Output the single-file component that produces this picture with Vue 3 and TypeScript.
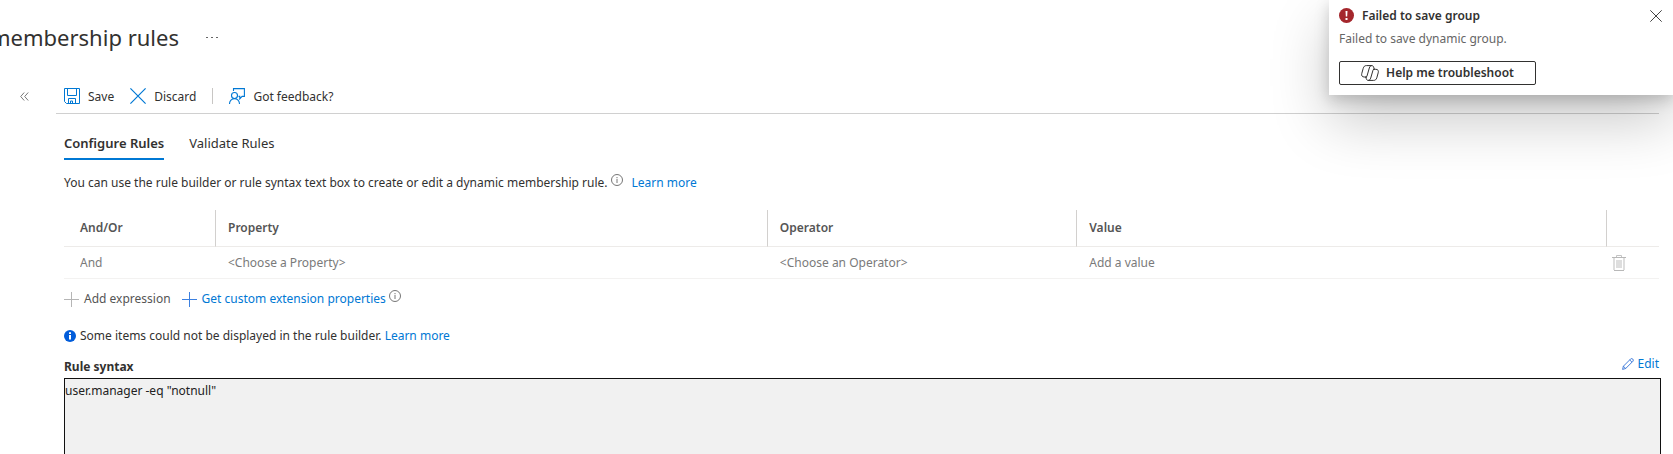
<script setup lang="ts">
import { ref } from 'vue'

const syntax = ref('user.manager -eq "notnull"')
const value = ref('')
</script>

<template>
  <div class="page">
    <header class="title-bar">
      <h1>membership rules</h1>
      <button class="more" aria-label="More options">
        <svg width="13" height="3" viewBox="0 0 13 3" fill="#666"><rect x="0" y="1" width="2" height="1" /><rect x="5" y="1" width="2" height="1" /><rect x="10" y="1" width="2" height="1" /></svg>
      </button>
    </header>

    <div class="body">
      <aside class="rail">
        <button class="collapse" aria-label="Collapse menu">
          <svg width="9" height="9" viewBox="0 0 9 9" fill="none" stroke="#777" stroke-width="1"><path d="M4.2 .5L.7 4.5l3.5 4M8.2 .5L4.7 4.5l3.500 4" /></svg>
        </button>
      </aside>

      <main class="content">
        <div class="toolbar">
          <button class="tool">
            <svg width="16" height="16" viewBox="0 0 16 16" fill="none" stroke="#0078d4"><path d="M.5 .5h15v15H2.500l-2-2zM3.500 .5v7h9v-7M4.500 15.500v-5h7v5M6.500 15.500v-2.500h2v2.500" /></svg>
            <span>Save</span>
          </button>
          <button class="tool">
            <svg width="16" height="16" viewBox="0 0 16 16" fill="none" stroke="#0078d4" stroke-width="1.200"><path d="M.4 .4l15.200 15.200M15.600 .4L.4 15.600" /></svg>
            <span>Discard</span>
          </button>
          <span class="divider"></span>
          <button class="tool">
            <svg width="16" height="16" viewBox="0 0 16 16" fill="none" stroke="#0078d4" stroke-width="1.100"><path d="M4.500 3V.6h10.900v7.800h-2.300l-2.300 2.400V8.400H9.500" /><circle cx="5.500" cy="7.500" r="3" /><path d="M.5 16c0-3 2.200-5.400 5-5.400s5 2.400 5 5.400" /></svg>
            <span>Got feedback?</span>
          </button>
        </div>

        <div class="blade">
          <div class="tabs" role="tablist">
            <button class="tab active" role="tab" aria-selected="true">Configure Rules</button>
            <button class="tab" role="tab" aria-selected="false">Validate Rules</button>
          </div>

          <p class="intro">
            <span>You can use the rule builder or rule syntax text box to create or edit a dynamic membership rule.</span>
            <svg class="info" width="12" height="12" viewBox="0 0 12 12" fill="none" stroke="#666" stroke-width=".9"><circle cx="6" cy="6" r="5.500" /><path d="M6 5v4M6 3v1.200" /></svg>
            <a href="#">Learn more</a>
          </p>

          <table class="rules">
            <thead>
              <tr>
                <th class="c-join">And/Or</th>
                <th class="c-prop">Property</th>
                <th class="c-op">Operator</th>
                <th>Value</th>
                <th class="c-act"></th>
              </tr>
            </thead>
            <tbody>
              <tr>
                <td class="c-join"><select aria-label="And/Or" disabled><option>And</option></select></td>
                <td><select aria-label="Property" disabled><option>&lt;Choose a Property&gt;</option></select></td>
                <td><select aria-label="Operator" disabled><option>&lt;Choose an Operator&gt;</option></select></td>
                <td><input v-model="value" aria-label="Value" type="text" placeholder="Add a value" disabled /></td>
                <td class="c-act">
                  <button class="trash" aria-label="Delete" disabled>
                    <svg width="14" height="16" viewBox="0 0 14 16" fill="none"><path d="M4.500 2V.5h5V2" stroke="#c4c4c4" /><path d="M0 2.500h14" stroke="#b8b8b8" /><path d="M2 3v12M12 3v12" stroke="#dedede" stroke-width="2" /><path d="M2 15.500h10" stroke="#b8b8b8" /><path d="M4 5h6v8H4z" fill="#dedede" /></svg>
                  </button>
                </td>
              </tr>
            </tbody>
          </table>

          <div class="actions">
            <button class="add">
              <svg width="15" height="15" viewBox="0 0 15 15" stroke="#b5b5b5"><path d="M0 7.500h15M7.500 0v15" /></svg>
              <span>Add expression</span>
            </button>
            <a href="#" class="get">
              <svg width="15" height="15" viewBox="0 0 15 15" stroke="#3c80e0"><path d="M0 7.500h15M7.500 0v15" /></svg>
              <span>Get custom extension properties</span>
            </a>
            <svg class="info" width="12" height="12" viewBox="0 0 12 12" fill="none" stroke="#666" stroke-width=".9"><circle cx="6" cy="6" r="5.500" /><path d="M6 5v4M6 3v1.200" /></svg>
          </div>

          <p class="note">
            <svg width="12" height="12" viewBox="0 0 12 12"><circle cx="6" cy="6" r="6" fill="#015cda" /><path d="M5 5h2v4.500H5zM5 2.300h2v1.700H5z" fill="#fff" /></svg>
            <span>Some items could not be displayed in the rule builder. <a href="#">Learn more</a></span>
          </p>

          <div class="syntax-head">
            <label for="syntax">Rule syntax</label>
            <a href="#" class="edit">
              <svg width="12" height="12" viewBox="0 0 12 12" fill="none" stroke="#2f6fd6" stroke-width=".9"><path d="M.6 11.400l.8-3.200L8.700 .9c1.300-1.200 3.500 .9 2.300 2.300L3.700 10.500zM1.400 8.200l2.300 2.300M7.700 1.900L10 4.200" /></svg>
              <span>Edit</span>
            </a>
          </div>
          <textarea id="syntax" v-model="syntax" readonly></textarea>
        </div>
      </main>
    </div>

    <section class="toast" role="alert">
      <div class="toast-head">
        <svg width="15" height="15" viewBox="0 0 15 15"><circle cx="7.500" cy="7.500" r="7.500" fill="#a4262c" /><path d="M6.500 3h2l-.3 5.500H6.800zM6.500 10h2v2h-2z" fill="#fff" /></svg>
        <strong>Failed to save group</strong>
        <button class="close" aria-label="Close">
          <svg width="12" height="12" viewBox="0 0 12 12" stroke="#444" stroke-width="1"><path d="M.3 .3l11.400 11.400M11.700 .3L.3 11.700" /></svg>
        </button>
      </div>
      <p>Failed to save dynamic group.</p>
      <button class="help">
        <svg width="18" height="16" viewBox="0 0 18 16" fill="none" stroke="#323130" stroke-width="1" stroke-linejoin="round"><path d="M6 12H3.200C1 12 .2 10.400 .8 8.400l1.400-5C2.800 1.500 3.600 .6 5.400 .6h5.400c1.300 0 1.700 .9 2.100 2.300l.5 1.400" /><path d="M12 4.300h2.800c2.200 0 3 1.400 2.400 3.500l-1.400 5c-.6 1.800-1.500 2.600-3.200 2.600H7.200c-1.300 0-1.700-.9-2.100-2.200L4.800 12" /><path d="M10.800 .6C9.400 .6 8.800 1.600 8.300 3L6 11c-.4 1.200-1 1-1.700 1M7.200 15.400c1.400 0 2-.9 2.500-2.300L12 5.200c.3-.8 .8-.9 1.500-.9" /></svg>
        <span>Help me troubleshoot</span>
      </button>
    </section>
  </div>
</template>

<style>
body {
  margin: 0;
  background: #fff;
  overflow: hidden;
}
</style>

<style scoped>
.page {
  position: relative;
  display: flex;
  flex-direction: column;
  min-height: 100vh;
  overflow: hidden;
  font: 12px/20px "Segoe UI", "Noto Sans", "Open Sans", sans-serif;
  color: #323130;
}
button, input, select, textarea {
  font: inherit;
  color: inherit;
  background: none;
  border: 0;
  padding: 0;
  margin: 0;
}
svg { flex: none; display: block; }
a { color: #0078d4; text-decoration: none; }
p { margin: 0; }
.title-bar {
  display: flex;
  align-items: center;
  gap: 27px;
  height: 74px;
  margin-left: -10px;
}
h1 {
  margin: 0;
  font-size: 22px;
  line-height: 32px;
  font-weight: 400;
}
.body { display: flex; flex: 1; }
.rail { width: 56px; }
.collapse { margin: 18px 0 0 20px; }
.content {
  flex: 1;
  display: flex;
  flex-direction: column;
}
.toolbar {
  display: flex;
  align-items: center;
  height: 40px;
  padding: 4px 0 0 8px;
  margin-right: 14px;
  box-sizing: border-box;
  gap: 16px;
  border-bottom: 1px solid #d0d0d0;
}
.tool { display: flex; align-items: center; gap: 8px; height: 20px; }
.tool span { padding-top: 2px; }
.divider { width: 1px; height: 16px; background: #c8c6c4; }
.blade {
  flex: 1;
  display: flex;
  flex-direction: column;
  padding: 0 12px 0 8px;
}
.tabs { display: flex; gap: 25px; padding-top: 18px; }
.tab { font-size: 13px; height: 28px; padding-bottom: 4px; border-bottom: 2px solid transparent; box-sizing: border-box; }
.tab.active { font-weight: 600; border-bottom-color: #0078d4; }
.intro { display: flex; padding-top: 13px; gap: 4px; }
.intro a { margin-left: 4px; }
.info { margin-top: 1px; }
.rules {
  table-layout: fixed;
  border-collapse: separate;
  border-spacing: 0;
  margin: 17px 2px 0 0;
}
th, td { padding: 0 0 0 12px; text-align: left; box-sizing: border-box; }
th { height: 37px; font-weight: 600; color: #555; border-right: 1px solid #d2d0ce; border-bottom: 1px solid #edebe9; }
td { height: 32px; border-bottom: 1px solid #f3f2f1; color: #7a7a7a; }
th:last-child { border-right: 0; }
.c-join { width: 152px; padding-left: 16px; }
.c-prop { width: 34.6%; }
.c-op { width: 19.4%; }
.c-act { width: 52px; padding-left: 5px; }
select { appearance: none; opacity: 1; display: block; height: 20px; }
td input { display: block; width: 90%; height: 20px; }
td input::placeholder { color: #7a7a7a; opacity: 1; }
.trash { display: block; }
.actions { display: flex; align-items: center; margin-top: 10px; }
.actions .info { margin: 0 0 6px 3px; }
.add, .get { display: flex; align-items: center; gap: 5px; height: 20px; }
.add { margin-right: 11px; color: #555; }
.note { display: flex; align-items: center; gap: 4px; margin-top: 17px; }
.syntax-head { display: flex; justify-content: space-between; margin: 8px 2px 0 0; height: 24px; align-items: flex-start; }
label { font-weight: 700; padding-top: 3px; }
.edit { display: flex; align-items: center; gap: 4px; }
textarea {
  flex: 1;
  min-height: 74px;
  border: 1px solid #111;
  border-bottom: 0;
  background: #f1f1f1;
  resize: none;
  outline: 0;
  padding-top: 2px;
  color: #222;
}
.toast {
  position: absolute;
  top: 0;
  right: 0;
  width: 344px;
  height: 95px;
  box-sizing: border-box;
  padding: 5px 10px 10px;
  background: #fff;
  box-shadow: 0 25px 58px rgba(0, 0, 0, .22), 0 5px 14px rgba(0, 0, 0, .18);
}
.toast-head { display: flex; align-items: center; gap: 8px; }
.toast-head strong { font-weight: 600; padding-top: 1px; }
.close { margin-left: auto; padding-right: 1px; }
.toast p { color: #666; margin-top: 3px; }
.help {
  display: flex;
  align-items: center;
  justify-content: center;
  gap: 7px;
  width: 197px;
  height: 24px;
  margin-top: 12px;
  border: 1px solid #323130;
  border-radius: 2px;
  font-weight: 600;
}
</style>
